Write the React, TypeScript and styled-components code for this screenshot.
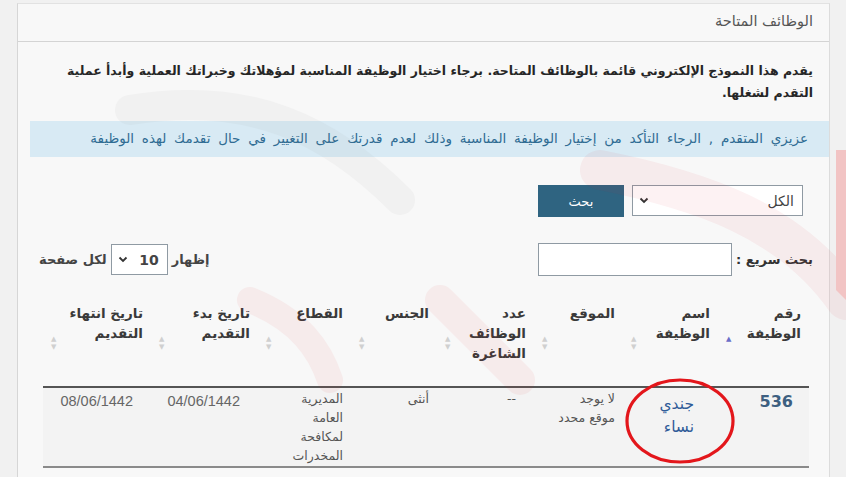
import React from 'react';
import styled, { createGlobalStyle } from 'styled-components';

const GlobalStyle = createGlobalStyle`
    html, body {
        margin: 0;
        padding: 0;
        background: #f1f1f1;
        font-family: 'DejaVu Sans', 'Noto Sans', sans-serif;
    }
`;

interface Column {
    title: React.ReactNode;
    width: number;
    sorted?: boolean;
}

const columns: Column[] = [
    { title: <>رقم<br />الوظيفة</>, width: 91, sorted: true },
    { title: <>اسم<br />الوظيفة</>, width: 95 },
    { title: 'الموقع', width: 89 },
    { title: <>عدد<br />الوظائف<br />الشاغرة</>, width: 97 },
    { title: 'الجنس', width: 86 },
    { title: 'القطاع', width: 93 },
    { title: <>تاريخ بدء<br />التقديم</>, width: 107 },
    { title: <>تاريخ انتهاء<br />التقديم</>, width: 108 },
];

const Page = styled.div`
    position: relative;
    padding: 3px 0 0 17px;
    height: 474px;
    overflow: hidden;
`;

const Panel = styled.div`
    direction: rtl;
    width: 811px;
    height: 480px;
    background: #f8f8f8;
    border-left: 1px solid #d6d6d6;
    border-right: 1px solid #dcdcdc;
    border-top: 1px solid #e2e2e2;
`;

const PanelHeader = styled.div`
    height: 37px;
    line-height: 35px;
    padding: 0 16px;
    font-size: 14.5px;
    color: #555;
    border-bottom: 1px solid #d4d4d4;
`;

const PanelBody = styled.div`
    padding: 18px 16px 0 12px;
`;

const Intro = styled.p`
    margin: 0;
    font-size: 12.5px;
    font-weight: bold;
    line-height: 22px;
    color: #262626;
`;

const InfoBox = styled.div`
    margin: 17px -16px 0 0;
    height: 36px;
    line-height: 35px;
    padding: 0 21px;
    background: #d8eaf4;
    color: #2f6c93;
    font-size: 13.5px;
    word-spacing: 3.5px;
`;

const FilterRow = styled.div`
    display: flex;
    gap: 8px;
    margin-top: 28px;
    padding-right: 10px;
`;

const SelectBox = styled.div<{ $w: number; $h: number }>`
    display: flex;
    align-items: center;
    justify-content: space-between;
    width: ${p => p.$w}px;
    height: ${p => p.$h}px;
    box-sizing: border-box;
    border: 1px solid #8f9aa3;
    background: #fff;
    padding: 0 8px 0 6px;
    font-size: 14px;
    color: #444;
`;

const Chevron = () => (
    <svg width="10" height="7" viewBox="0 0 10 7">
        <path d="M1.5 1.5 L5 5 L8.5 1.5" fill="none" stroke="#333" strokeWidth="1.8" />
    </svg>
);

const SearchButton = styled.button`
    width: 86px;
    height: 32px;
    border: none;
    background: #2f6481;
    color: #fff;
    font-family: inherit;
    font-size: 13px;
`;

const ToolsRow = styled.div`
    display: flex;
    justify-content: space-between;
    align-items: center;
    margin-top: 26px;
`;

const QuickSearch = styled.label`
    display: flex;
    align-items: center;
    gap: 4px;
    font-size: 13px;
    font-weight: bold;
    color: #333;
`;

const SearchInput = styled.div`
    width: 194px;
    height: 33px;
    box-sizing: border-box;
    border: 1px solid #8f9aa3;
    background: #fff;
`;

const LengthControl = styled.div`
    display: flex;
    align-items: center;
    gap: 4px;
    margin-left: 9px;
    font-size: 13px;
    font-weight: bold;
    color: #444;
`;

const Table = styled.table`
    margin: 19px 20px 0 0;
    width: 766px;
    table-layout: fixed;
    border-collapse: collapse;
`;

const Th = styled.th`
    position: relative;
    vertical-align: top;
    text-align: right;
    padding: 8px 8px 20px 22px;
    height: 92px;
    box-sizing: border-box;
    font-size: 13.5px;
    font-weight: bold;
    line-height: 20px;
    color: #3a3a3a;
    border-bottom: 2px solid #555;
`;

const SortIcon = styled.span<{ $active?: boolean }>`
    position: absolute;
    left: 8px;
    top: 41px;
    display: flex;
    flex-direction: column;
    gap: 1px;
    font-size: 7px;
    line-height: 7px;
    color: ${p => (p.$active ? '#6a6ec8' : '#d0d0d0')};
`;

const Td = styled.td`
    vertical-align: top;
    text-align: right;
    padding: 1px 8px 1px 8px;
    font-size: 12.5px;
    line-height: 19px;
    color: #555;
    background: #f3f3f3;
    border-bottom: 2px solid #8a8a8a;
`;

const JobNumber = styled.span`
    display: inline-block;
    margin: 3px 8px 0 0;
    font-size: 16px;
    font-weight: bold;
    color: #3d5f80;
`;

const JobNameCell = styled(Td)`
    position: relative;
`;

const JobName = styled.a`
    display: block;
    margin: 4px 16px 0 0;
    font-size: 15.5px;
    line-height: 23px;
    color: #2f5b98;
    text-decoration: none;
`;

const DateText = styled.span`
    display: block;
    margin: 3px 10px 0 0;
    direction: ltr;
    text-align: right;
    font-family: 'Liberation Sans', sans-serif;
    font-size: 14.5px;
    color: #666;
`;

const Circle = styled.svg`
    position: absolute;
    left: 1px;
    top: -11px;
    pointer-events: none;
`;

const Watermark = styled.svg`
    position: absolute;
    inset: 0;
    pointer-events: none;
`;

export default function App() {
    return (
        <>
            <GlobalStyle />
            <Page>
                <Panel>
                    <PanelHeader>الوظائف المتاحة</PanelHeader>
                    <PanelBody>
                        <Intro>
                            يقدم هذا النموذج الإلكتروني قائمة بالوظائف المتاحة. برجاء اختيار الوظيفة المناسبة
                            لمؤهلاتك وخبراتك العملية وأبدأ عملية التقدم لشغلها.
                        </Intro>
                        <InfoBox>
                            عزيزي المتقدم , الرجاء التأكد من إختيار الوظيفة المناسبة وذلك لعدم قدرتك على التغيير في
                            حال تقدمك لهذه الوظيفة
                        </InfoBox>
                        <FilterRow>
                            <SelectBox $w={171} $h={31}>
                                <span>الكل</span>
                                <Chevron />
                            </SelectBox>
                            <SearchButton>بحث</SearchButton>
                        </FilterRow>
                        <ToolsRow>
                            <QuickSearch>
                                بحث سريع :
                                <SearchInput />
                            </QuickSearch>
                            <LengthControl>
                                إظهار
                                <SelectBox $w={57} $h={31}>
                                    <b>10</b>
                                    <Chevron />
                                </SelectBox>
                                لكل صفحة
                            </LengthControl>
                        </ToolsRow>
                    </PanelBody>
                    <Table>
                        <colgroup>
                            {columns.map((c, i) => (
                                <col key={i} style={{ width: c.width }} />
                            ))}
                        </colgroup>
                        <thead>
                            <tr>
                                {columns.map((c, i) => (
                                    <Th key={i}>
                                        {c.title}
                                        <SortIcon $active={c.sorted}>
                                            <span>▲</span>
                                            {!c.sorted && <span>▼</span>}
                                        </SortIcon>
                                    </Th>
                                ))}
                            </tr>
                        </thead>
                        <tbody>
                            <tr>
                                <Td>
                                    <JobNumber>536</JobNumber>
                                </Td>
                                <JobNameCell>
                                    <JobName href="#">
                                        جندي
                                        <br />
                                        نساء
                                    </JobName>
                                    <Circle width="112" height="88" viewBox="0 0 112 88">
                                        <ellipse cx="56" cy="44" rx="53" ry="41" fill="none" stroke="#e3161b" strokeWidth="3.2" />
                                    </Circle>
                                </JobNameCell>
                                <Td>
                                    لا يوجد
                                    <br />
                                    موقع محدد
                                </Td>
                                <Td>
                                    <span style={{ marginRight: 10 }}>--</span>
                                </Td>
                                <Td>أنثى</Td>
                                <Td>
                                    المديرية
                                    <br />
                                    العامة
                                    <br />
                                    لمكافحة
                                    <br />
                                    المخدرات
                                </Td>
                                <Td>
                                    <DateText>04/06/1442</DateText>
                                </Td>
                                <Td>
                                    <DateText>08/06/1442</DateText>
                                </Td>
                            </tr>
                        </tbody>
                    </Table>
                </Panel>
                <Watermark width="846" height="477" viewBox="0 0 846 477">
                    <g fill="none" strokeLinecap="round" opacity="0.06">
                        <path d="M600 170 C 700 190, 790 220, 846 300" stroke="#e0282c" strokeWidth="40" />
                        <path d="M440 300 L 520 380" stroke="#e0282c" strokeWidth="30" />
                        <path d="M250 300 C 300 320, 320 350, 330 380" stroke="#e0282c" strokeWidth="26" />
                        <path d="M130 110 C 250 90, 330 130, 400 200" stroke="#8a8a8a" strokeWidth="30" />
                    </g>
                    <path d="M836 150 L 846 150 L 846 300 L 836 290 Z" fill="#f2c4c4" />
                </Watermark>
            </Page>
        </>
    );
}
